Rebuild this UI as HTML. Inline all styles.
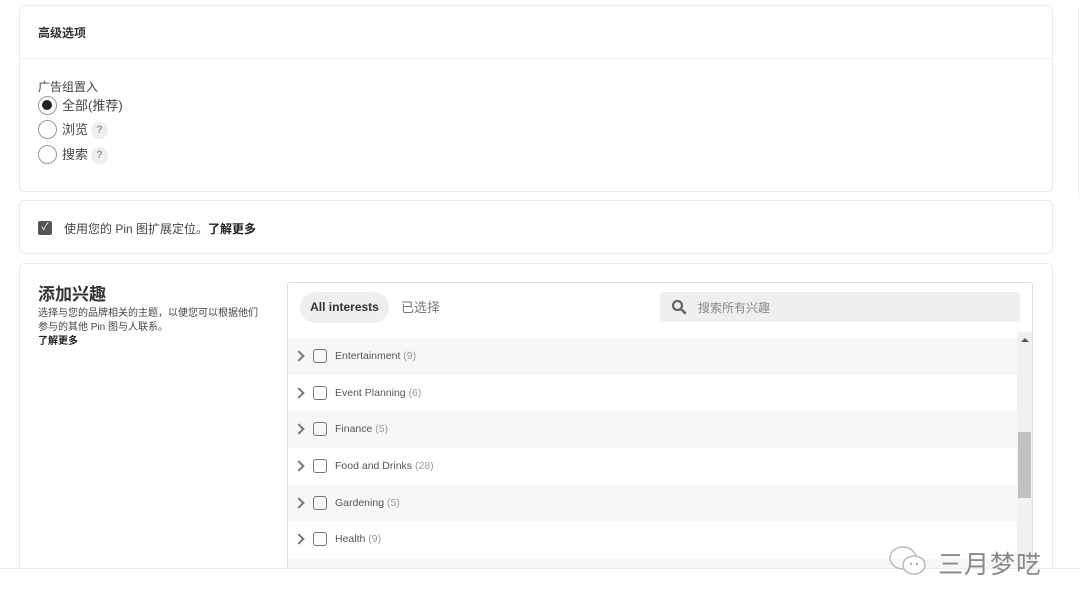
<!DOCTYPE html>
<html><head><meta charset="utf-8"><style>
*{box-sizing:border-box;margin:0;padding:0}
body{width:1080px;height:610px;background:#fff;position:relative;overflow:hidden;font-family:"Liberation Sans","Noto Sans CJK SC",sans-serif;color:#333}
.card{position:absolute;left:19px;width:1034px;border:1px solid #ebebeb;border-radius:5px;background:#fff}
.abs{position:absolute}
.radio{position:absolute;left:38px;width:19px;height:19px;border:1.5px solid #999;border-radius:50%}
.q{display:inline-block;width:17px;height:17px;border-radius:50%;background:#efefef;color:#999;font-size:11px;text-align:center;line-height:17px;font-weight:bold;margin-left:3px;vertical-align:middle}
.lbl{position:absolute;left:62px;font-size:13px;line-height:17px;color:#444}
.row{position:absolute;left:288px;width:729px;height:37px}
.row .chev{position:absolute;left:7px;top:14px;width:8px;height:8px;border-right:2px solid #777;border-top:2px solid #777;transform:rotate(45deg)}
.row .cb{position:absolute;left:25px;top:11px;width:14px;height:14px;border:1.5px solid #777;border-radius:3px}
.row .t{position:absolute;left:47px;top:12px;font-size:10.5px;line-height:13px;color:#555}
.row .t span{color:#999}
</style></head><body>
<div class="abs" style="left:1078px;top:8px;width:1px;height:190px;background:#eee"></div>
<div class="card" style="top:5px;height:187px">
 <div class="abs" style="left:0;top:52px;width:100%;height:1px;background:#efefef"></div>
</div>
<div class="abs" style="left:38px;top:24px;font-size:12px;font-weight:bold;color:#333">高级选项</div>
<div class="abs" style="left:38px;top:78px;font-size:12px;color:#444">广告组置入</div>
<div class="radio" style="top:96px"><div style="position:absolute;left:3px;top:3px;width:10px;height:10px;border-radius:50%;background:#222"></div></div>
<div class="lbl" style="top:97px">全部(推荐)</div>
<div class="radio" style="top:120px"></div>
<div class="lbl" style="top:121px">浏览<span class="q">?</span></div>
<div class="radio" style="top:145px"></div>
<div class="lbl" style="top:146px">搜索<span class="q">?</span></div>

<div class="card" style="top:200px;height:54px"></div>
<div class="abs" style="left:38px;top:221px;width:14px;height:14px;background:#555;border-radius:2px;color:#fff;font-size:10px;text-align:center;line-height:14px">✓</div>
<div class="abs" style="left:64px;top:220px;font-size:12px;color:#444">使用您的 Pin 图扩展定位。<b style="color:#222">了解更多</b></div>

<div class="card" style="top:263px;height:320px"></div>
<div class="abs" style="left:0;top:568px;width:1080px;height:42px;background:#fff;border-top:1px solid #ececec"></div>
<div class="abs" style="left:38px;top:284px;font-size:17px;line-height:22px;font-weight:bold;color:#333">添加兴趣</div>
<div class="abs" style="left:38px;top:307px;font-size:10px;color:#444;line-height:14px;width:228px">选择与您的品牌相关的主题，以便您可以根据他们参与的其他 Pin 图与人联系。<br><b style="color:#222">了解更多</b></div>

<div class="abs" style="left:287px;top:282px;width:746px;height:286px;border:1px solid #ddd;border-bottom:none;border-radius:3px 3px 0 0"></div>
<div class="abs" style="left:300px;top:292px;width:89px;height:31px;border-radius:16px;background:#efefef;font-size:12px;font-weight:bold;color:#333;text-align:center;line-height:31px">All interests</div>
<div class="abs" style="left:401px;top:299px;font-size:13px;line-height:17px;color:#777">已选择</div>
<div class="abs" style="left:660px;top:292px;width:360px;height:30px;background:#efefef;border-radius:3px"></div>
<svg class="abs" style="left:671px;top:299px" width="16" height="16" viewBox="0 0 16 16"><circle cx="6.5" cy="6.5" r="4.5" fill="none" stroke="#666" stroke-width="2.2"/><path d="M10 10l4 4" stroke="#666" stroke-width="2.6" stroke-linecap="round"/></svg>
<div class="abs" style="left:698px;top:299px;font-size:12px;color:#888">搜索所有兴趣</div>

<div class="row" style="top:338px;background:#f7f7f7"><div class="chev"></div><div class="cb"></div><div class="t">Entertainment <span>(9)</span></div></div>
<div class="row" style="top:375px"><div class="chev"></div><div class="cb"></div><div class="t">Event Planning <span>(6)</span></div></div>
<div class="row" style="top:411px;background:#f7f7f7"><div class="chev"></div><div class="cb"></div><div class="t">Finance <span>(5)</span></div></div>
<div class="row" style="top:448px"><div class="chev"></div><div class="cb"></div><div class="t">Food and Drinks <span>(28)</span></div></div>
<div class="row" style="top:485px;background:#f7f7f7"><div class="chev"></div><div class="cb"></div><div class="t">Gardening <span>(5)</span></div></div>
<div class="row" style="top:521px"><div class="chev"></div><div class="cb"></div><div class="t">Health <span>(9)</span></div></div>
<div class="row" style="top:558px;height:10px;background:#f7f7f7"></div>

<div class="abs" style="left:1017px;top:332px;width:15px;height:236px;background:#f1f1f1"></div>
<div class="abs" style="left:1021px;top:338px;width:0;height:0;border-left:4px solid transparent;border-right:4px solid transparent;border-bottom:4px solid #555"></div>
<div class="abs" style="left:1018px;top:432px;width:13px;height:66px;background:#c1c1c1"></div>

<svg class="abs" style="left:886px;top:543px" width="46" height="36" viewBox="0 0 46 36"><ellipse cx="17" cy="15" rx="13" ry="11" fill="none" stroke="#bbb" stroke-width="1.5"/><ellipse cx="28" cy="22" rx="11" ry="9" fill="#fff" stroke="#bbb" stroke-width="1.5"/><circle cx="25" cy="21" r="1.2" fill="#aaa"/><circle cx="31" cy="21" r="1.2" fill="#aaa"/></svg>
<div class="abs" style="left:938px;top:545px;font-size:25px;color:#888;letter-spacing:1px;text-shadow:0 0 1px #fff">三月梦呓</div>
</body></html>
